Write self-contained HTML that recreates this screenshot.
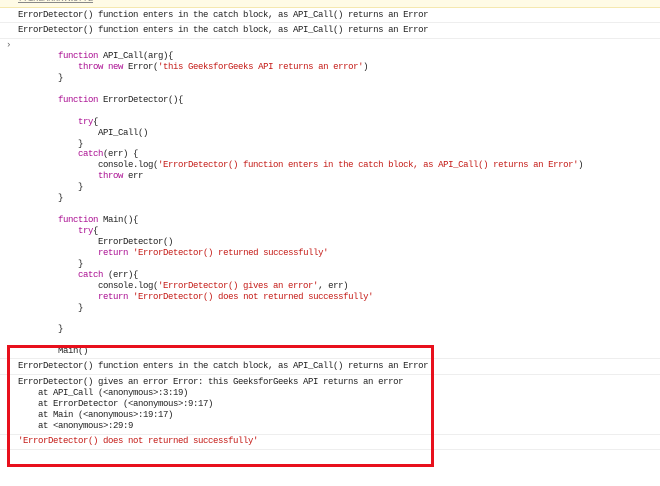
<!DOCTYPE html>
<html><head><style>
body{margin:0;width:660px;height:486px;background:#fff;position:relative;overflow:hidden;font-family:"Liberation Mono",monospace;font-size:9px;letter-spacing:-0.4px;color:#222}
.l{position:absolute;white-space:pre;line-height:10.93px}
.k{color:#aa0d91}.s{color:#c41a16}
.sep{position:absolute;left:0;width:660px;height:1px;background:#eee}
</style></head><body>
<div style="position:absolute;left:0;top:0;width:660px;height:7px;background:#fffbe6;border-bottom:1px solid #f5e8b0"></div>
<div class="l" style="left:18px;top:-6px;color:#888;text-decoration:underline">f7iHdMHxK.woff2</div>
<div class="l" style="left:18px;top:10px">ErrorDetector() function enters in the catch block, as API_Call() returns an Error</div>
<div class="sep" style="top:22px"></div>
<div class="l" style="left:18px;top:25px">ErrorDetector() function enters in the catch block, as API_Call() returns an Error</div>
<div class="sep" style="top:38px"></div>
<div class="l" style="left:6px;top:40px;color:#666">›</div>
<div class="l" style="left:18px;top:51px">        <span class="k">function</span> API_Call(arg){
            <span class="k">throw new</span> Error(<span class="s">'this GeeksforGeeks API returns an error'</span>)
        }

        <span class="k">function</span> ErrorDetector(){

            <span class="k">try</span>{
                API_Call()
            }
            <span class="k">catch</span>(err) {
                console.log(<span class="s">'ErrorDetector() function enters in the catch block, as API_Call() returns an Error'</span>)
                <span class="k">throw</span> err
            }
        }

        <span class="k">function</span> Main(){
            <span class="k">try</span>{
                ErrorDetector()
                <span class="k">return</span> <span class="s">'ErrorDetector() returned successfully'</span>
            }
            <span class="k">catch</span> (err){
                console.log(<span class="s">'ErrorDetector() gives an error'</span>, err)
                <span class="k">return</span> <span class="s">'ErrorDetector() does not returned successfully'</span>
            }

        }

        Main()</div>
<div class="sep" style="top:358px"></div>
<div class="l" style="left:18px;top:361px">ErrorDetector() function enters in the catch block, as API_Call() returns an Error</div>
<div class="sep" style="top:374px"></div>
<div class="l" style="left:18px;top:377px">ErrorDetector() gives an error Error: this GeeksforGeeks API returns an error
    at API_Call (&lt;anonymous&gt;:3:19)
    at ErrorDetector (&lt;anonymous&gt;:9:17)
    at Main (&lt;anonymous&gt;:19:17)
    at &lt;anonymous&gt;:29:9</div>
<div class="sep" style="top:434px"></div>
<div class="l" style="left:18px;top:436px;color:#c41a16">'ErrorDetector() does not returned successfully'</div>
<div class="sep" style="top:449px"></div>
<div style="position:absolute;left:7px;top:345px;width:421px;height:116px;border:3px solid #e8101c"></div>
</body></html>
